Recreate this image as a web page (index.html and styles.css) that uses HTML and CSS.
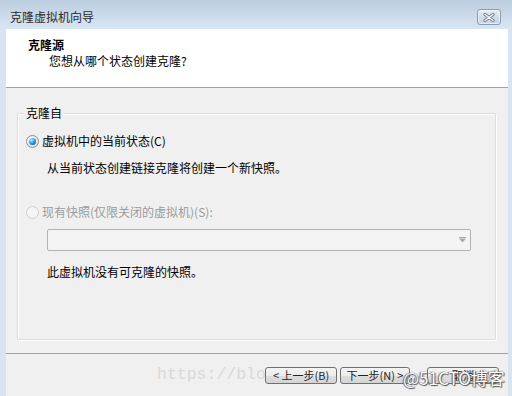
FILE: index.html
```html
<!DOCTYPE html>
<html lang="zh-CN">
<head>
<meta charset="utf-8">
<title>克隆虚拟机向导</title>
<link rel="stylesheet" href="styles.css">
</head>
<body>
<div class="window">
  <div class="titlebar">
    <span class="title">克隆虚拟机向导</span>
    <div class="close">
      <svg width="12" height="9" viewBox="0 0 12 9">
        <path d="M2 1.5 L10 7.5 M10 1.5 L2 7.5" stroke="#6f7c8c" stroke-width="3.2" stroke-linecap="round" fill="none"/>
        <path d="M2 1.5 L10 7.5 M10 1.5 L2 7.5" stroke="#ffffff" stroke-width="1.4" stroke-linecap="round" fill="none"/>
      </svg>
    </div>
  </div>
  <div class="client">
    <div class="header">
      <div class="h-title">克隆源</div>
      <div class="h-sub">您想从哪个状态创建克隆?</div>
    </div>
    <div class="body">
      <div class="group">
        <span class="legend">克隆自</span>
        <div class="option">
          <span class="radio checked"></span>
          <span>虚拟机中的当前状态(C)</span>
        </div>
        <div class="desc">从当前状态创建链接克隆将创建一个新快照。</div>
        <div class="option disabled">
          <span class="radio"></span>
          <span>现有快照(仅限关闭的虚拟机)(S):</span>
        </div>
        <div class="combo">
          <svg class="arrow" width="7" height="6" viewBox="0 0 7 6">
            <rect x="0" y="0" width="7" height="1" fill="#a8a8a8"/>
            <polygon points="0,1.5 7,1.5 3.5,5.5" fill="#a8a8a8"/>
          </svg>
        </div>
        <div class="note">此虚拟机没有可克隆的快照。</div>
      </div>
      <div class="footer">
        <span class="wm-url">https://blo</span>
        <button class="btn b1">&lt; 上一步(B)</button>
        <button class="btn b2">下一步(N) &gt;</button>
        <button class="btn b3">取消</button>
        <span class="wm-51">@51CTO博客</span>
      </div>
    </div>
  </div>
</div>
</body>
</html>
```
FILE: styles.css
```css
* { box-sizing: border-box; }
html, body { margin: 0; padding: 0; }
body {
  width: 512px;
  height: 396px;
  overflow: hidden;
  font-family: "Noto Sans CJK SC", "Noto Sans", sans-serif;
  font-size: 12px;
  color: #000;
}
.window {
  width: 512px;
  height: 396px;
  background: #d7e4f2;
  display: flex;
  flex-direction: column;
}
.titlebar {
  height: 29px;
  flex: none;
  display: flex;
  align-items: flex-start;
  justify-content: space-between;
  padding: 9px 11px 0 10px;
  background: linear-gradient(#bccddf, #d9e6f4);
}
.title {
  line-height: 16px;
  color: #2b2b2b;
}
.close {
  width: 24px;
  height: 16px;
  border: 1px solid #8d9cb0;
  border-radius: 3px;
  background: linear-gradient(#e6edf5, #d2deea 50%, #c7d5e5);
  box-shadow: inset 0 0 0 1px rgba(255,255,255,0.5);
  display: flex;
  align-items: center;
  justify-content: center;
}
.client {
  flex: 1;
  margin: 0 4px 0 6px;
  display: flex;
  flex-direction: column;
}
.header {
  height: 59px;
  flex: none;
  background: #fff;
  border-bottom: 1px solid #a0a0a0;
  padding-top: 8px;
}
.h-title {
  font-weight: bold;
  line-height: 16px;
  padding-left: 22px;
}
.h-sub {
  line-height: 16px;
  padding-left: 43px;
}
.body {
  flex: 1;
  background: #f0f0f0;
  padding-top: 25px;
}
.group {
  position: relative;
  margin: 0 12px 0 11px;
  height: 227px;
  border: 1px solid #d5dfe5;
  border-radius: 2px;
  box-shadow: inset 1px 1px 0 #fff, 1px 1px 0 #fff;
  padding: 19px 0 0 8px;
}
.legend {
  position: absolute;
  left: 6px;
  top: -9px;
  padding: 0 2px;
  line-height: 16px;
  background: #f0f0f0;
}
.option {
  display: flex;
  align-items: center;
  height: 16px;
  line-height: 16px;
  gap: 3px;
}
.option + .desc { margin-top: 11px; }
.desc, .note {
  line-height: 16px;
  padding-left: 21px;
}
.option.disabled {
  margin-top: 28px;
  color: #9b9b9b;
}
.radio {
  position: relative;
  width: 13px;
  height: 13px;
  border-radius: 50%;
  border: 1px solid #8e8f8f;
  background: radial-gradient(circle at 35% 35%, #ffffff, #e2e2e2 70%, #cfcfcf);
  flex: none;
}
.radio.checked::after {
  content: "";
  position: absolute;
  left: 2px;
  top: 2px;
  width: 7px;
  height: 7px;
  border-radius: 50%;
  background: radial-gradient(circle at 35% 30%, #b6ecff, #3aa0e0 45%, #0c4f8f 90%);
}
.disabled .radio {
  border-color: #cfcfcf;
  background: #f5f5f5;
}
.combo {
  margin: 9px 0 0 21px;
  width: 424px;
  height: 22px;
  border: 1px solid #b0b3b5;
  border-radius: 2px;
  background: #f4f4f4;
  display: flex;
  align-items: center;
  justify-content: flex-end;
  padding-right: 4px;
}
.note { margin-top: 13px; }
.footer {
  position: relative;
  margin-top: 13px;
  border-top: 1px solid #a0a0a0;
  height: 43px;
  padding: 13px 9px 0 0;
  display: flex;
  align-items: flex-start;
  justify-content: flex-end;
}
.wm-url {
  position: absolute;
  left: 151px;
  top: 12px;
  font-family: "Liberation Mono", monospace;
  font-size: 16.5px;
  line-height: 18px;
  color: #d9d9d9;
  white-space: nowrap;
}
.btn {
  position: relative;
  height: 17px;
  padding: 0;
  border: 1px solid #707070;
  border-radius: 3px;
  background: linear-gradient(#f4f4f4, #ececec 50%, #dedede 51%, #d4d4d4);
  font-family: "Noto Sans CJK SC", sans-serif;
  font-size: 11px;
  line-height: 15px;
  color: #222;
}
.b1 { width: 72px; }
.b2 { width: 70px; margin-left: 3px; }
.b3 { width: 72px; margin-left: 17px; }
.wm-51 {
  position: absolute;
  left: 397px;
  top: 14px;
  font-size: 17px;
  line-height: 20px;
  color: #fff;
  white-space: nowrap;
  text-shadow: 0 0 1px #444, 1px 1px 1px #555, -1px 0 1px #777;
}
```
